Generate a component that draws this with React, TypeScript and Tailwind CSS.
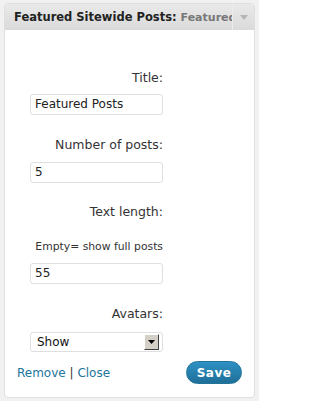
import React from "react";

const font = { fontFamily: '"DejaVu Sans", Verdana, sans-serif' };

function Label({ children, small }: { children: React.ReactNode; small?: boolean }) {
  return (
    <div
      className={
        small
          ? "text-right text-[10.8px] leading-[13px] text-[#333]"
          : "text-right text-[12.5px] leading-[15px] text-[#333]"
      }
    >
      {children}
    </div>
  );
}

function TextInput({ value }: { value: string }) {
  return (
    <div className="h-[21px] border border-[#dfdfdf] rounded-[3px] bg-white pl-[4px] text-[12px] leading-[19px] text-[#222]">
      {value}
    </div>
  );
}

export default function App() {
  return (
    <div className="w-[259px] h-[401px] bg-[#f1f1f1] pt-[3px] pl-[4px]" style={font}>
      <div className="w-[251px] h-[395px] border border-[#dfdfdf] rounded-[4px] bg-white flex flex-col overflow-hidden">
        {/* header */}
        <div className="h-[26px] flex bg-gradient-to-b from-[#e9e9e9] to-[#dadada] shrink-0">
          <div className="flex-1 overflow-hidden whitespace-nowrap pl-[9px] text-[11.5px] leading-[26px] font-bold text-[#222]">
            Featured Sitewide Posts: <span className="text-[#777] text-[11px]">Featured Posts</span>
          </div>
          <div className="w-[22px] border-l border-[#ececec] flex items-center justify-center">
            <svg width="8" height="5" viewBox="0 0 8 5">
              <path d="M0 0h8L4 5z" fill="#b5b5b5" />
            </svg>
          </div>
        </div>

        {/* form */}
        <div className="ml-[25px] w-[133px]">
          <div className="mt-[40px]">
            <Label>Title:</Label>
          </div>
          <div className="mt-[9px]">
            <TextInput value="Featured Posts" />
          </div>
          <div className="mt-[22px]">
            <Label>Number of posts:</Label>
          </div>
          <div className="mt-[10px]">
            <TextInput value="5" />
          </div>
          <div className="mt-[21px]">
            <Label>Text length:</Label>
          </div>
          <div className="mt-[21px]">
            <Label small>Empty= show full posts</Label>
          </div>
          <div className="mt-[10px]">
            <TextInput value="55" />
          </div>
          <div className="mt-[22px]">
            <Label>Avatars:</Label>
          </div>
          <div className="mt-[11px] h-[20px] border border-[#dfdfdf] rounded-[3px] flex items-center justify-between pl-[6px] pr-[3px]">
            <span className="text-[12px] text-[#111]">Show</span>
            <span className="w-[15px] h-[16px] bg-[#d4d0c8] border border-t-white border-l-white border-r-[#404040] border-b-[#404040] flex items-center justify-center">
              <svg width="7" height="4" viewBox="0 0 7 4">
                <path d="M0 0h7L3.5 4z" fill="#000" />
              </svg>
            </span>
          </div>
        </div>

        {/* footer */}
        <div className="mt-[9px] px-[12px] flex items-center justify-between">
          <div className="text-[12px] text-[#21759b]">
            Remove <span className="text-[#333]">|</span> Close
          </div>
          <button className="w-[56px] h-[23px] rounded-full bg-gradient-to-b from-[#2e91c4] to-[#1f6f98] border border-[#21759b] text-white font-bold text-[12px] tracking-[0.5px]">
            Save
          </button>
        </div>
      </div>
    </div>
  );
}
